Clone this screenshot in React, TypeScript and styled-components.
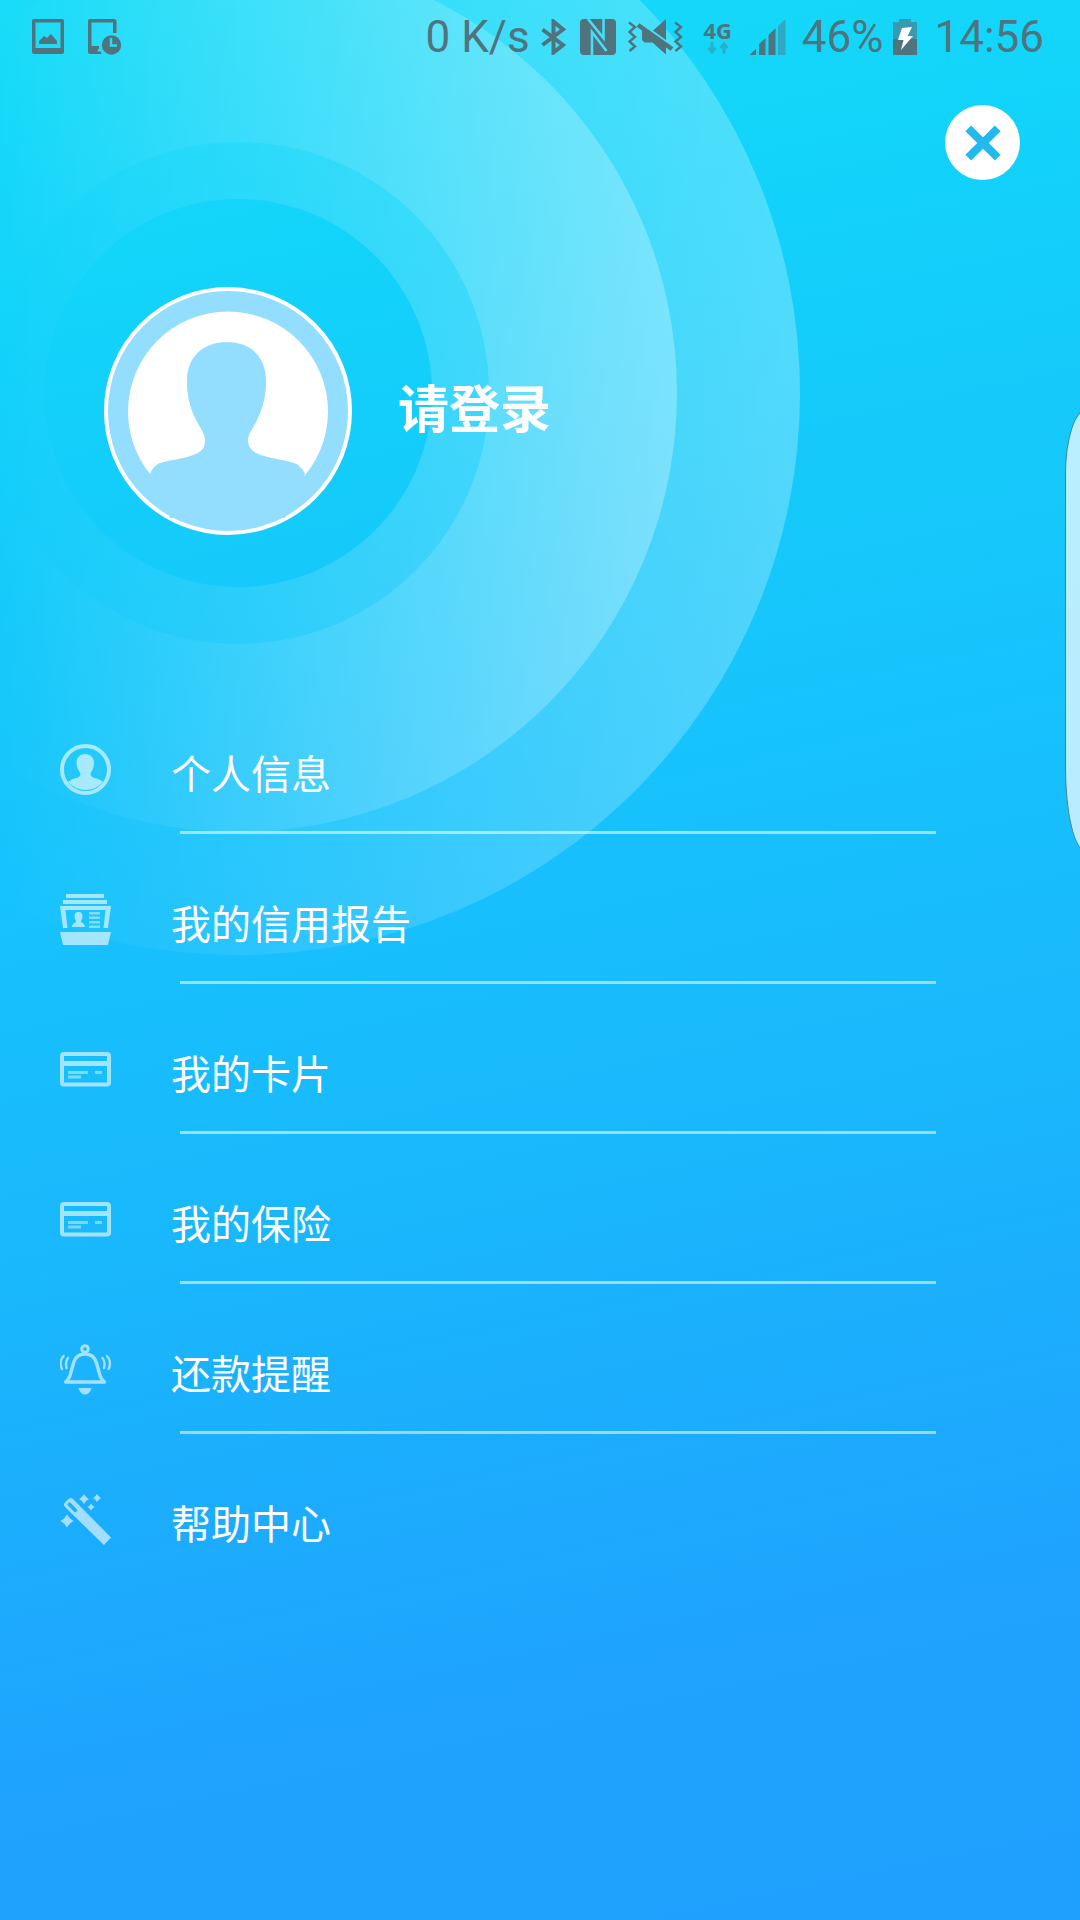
import React from "react";
import styled, { createGlobalStyle } from "styled-components";

const INK = "#4f747e";
const TINT = "#93ddfe";

const GlobalStyle = createGlobalStyle`
  *, *::before, *::after { box-sizing: border-box; }
  body {
    margin: 0;
    font-family: Roboto, "Noto Sans CJK SC", sans-serif;
    color: #fff;
  }
`;

const Screen = styled.div`
  position: relative;
  isolation: isolate;
  min-height: 100vh;
  overflow: hidden;
  background: linear-gradient(
    168deg,
    #18dcf8 0%,
    #12d3fa 15%,
    #15cafa 29%,
    #17c0fd 46%,
    #19b8fc 59%,
    #1cacfd 73%,
    #1fa3fe 84%,
    #1fa0ff 100%
  );
`;

const Ripples = styled.svg`
  position: absolute;
  top: 0;
  left: 0;
  z-index: -1;
`;

const StatusBar = styled.div`
  display: flex;
  align-items: center;
  justify-content: space-between;
  height: 74px;
  padding: 0 36px 0 32px;
  color: ${INK};
`;

const StatusGroup = styled.div<{ $gap: number }>`
  display: flex;
  align-items: center;
  gap: ${(p) => p.$gap}px;
`;

const StatusText = styled.span`
  font-size: 44px;
  line-height: 52px;
  white-space: nowrap;
`;

const Network = styled.span`
  display: flex;
  flex-direction: column;
  align-items: center;
  width: 40px;
  font: 700 22px/22px "Noto Sans", sans-serif;
`;

const Toolbar = styled.header`
  display: flex;
  justify-content: flex-end;
  padding: 31px 60px 0;
`;

const CloseButton = styled.button`
  display: grid;
  place-items: center;
  width: 75px;
  height: 75px;
  padding: 0;
  border: 0;
  border-radius: 50%;
  background: #fff;
  color: #22b9ee;
  cursor: pointer;
`;

const Profile = styled.a`
  display: flex;
  align-items: center;
  gap: 46px;
  margin: 107px 104px 0;
  color: inherit;
  text-decoration: none;
`;

const LoginText = styled.span`
  font-size: 51px;
  line-height: 64px;
  font-weight: 700;
`;

const Menu = styled.ul`
  margin: 149px 0 0;
  padding: 0;
  list-style: none;
`;

const MenuItem = styled.li`
  &:not(:last-child)::after {
    content: "";
    display: block;
    height: 3px;
    margin: 0 144px 0 180px;
    background: rgba(255, 255, 255, 0.55);
  }
`;

const MenuLink = styled.a`
  display: flex;
  align-items: flex-start;
  gap: 60px;
  height: 147px;
  padding: 60px 60px 0;
  color: inherit;
  text-decoration: none;
`;

const MenuIcon = styled.svg`
  flex: none;
  width: 51px;
  height: 51px;
  color: #fff;
  opacity: 0.6;
`;

const MenuLabel = styled.span`
  font-size: 40px;
  line-height: 64px;
`;

const EdgeHandle = styled.button`
  position: absolute;
  top: 409px;
  right: -30px;
  width: 45px;
  height: 444px;
  padding: 0;
  border: 1px solid #40809c;
  border-radius: 22px / 65px 65px 85px 85px;
  background: rgba(255, 255, 255, 0.7);
`;

const ring = (r: number, inner: number) =>
  `M${238 - r} 393a${r} ${r} 0 1 0 ${2 * r} 0a${r} ${r} 0 1 0 ${-2 * r} 0z` +
  `M${238 - inner} 393a${inner} ${inner} 0 1 0 ${2 * inner} 0a${inner} ${inner} 0 1 0 ${-2 * inner} 0z`;

const rings = [
  { id: "outer", r: 562, inner: 439, end: 801, alpha: 0.26 },
  { id: "middle", r: 439, inner: 251, end: 677, alpha: 0.44 },
  { id: "inner", r: 251, inner: 194, end: 489, alpha: 0.19 },
];

const star = (x: number, y: number, r: number) => {
  const k = r * 0.42;
  return `M${x} ${y - r}L${x + k} ${y - k}L${x + r} ${y}L${x + k} ${y + k}L${x} ${y + r}L${x - k} ${y + k}L${x - r} ${y}L${x - k} ${y - k}z`;
};

const PersonIcon = () => (
  <MenuIcon viewBox="0 0 51 51" aria-hidden="true">
    <circle cx="25.5" cy="25.5" r="23.500" fill="none" stroke="currentColor" strokeWidth="4" />
    <path
      fill="currentColor"
      d="M25 10c-5 0-8.500 3.500-8.500 8.500 0 4 1.500 7 3.500 10 1 2.500 0 4-2 5-3 1.300-7 1.500-10 4.500a23 23 0 0 0 35 0c-3-3-7-3.200-10-4.500-2-1-3-2.500-2-5 2-3 3-6 3-10C34 13.500 30 10 25 10z"
    />
  </MenuIcon>
);

const ReportIcon = () => (
  <MenuIcon viewBox="0 0 51 51" aria-hidden="true">
    <g fill="currentColor">
      <path d="M6 0h38v4H6zM3 6h44v4H3zM0 38h51l-3 13H3z" />
      <path d="M0 12h51l-3 22h-4.500l2-18H5.500l2 18H3z" />
      <path d="M18.500 18c-3 0-4 2-4 4.500s1.500 3.500 1.500 5-4 1.500-4 5.500h13c0-4-4-4-4-5.500s1.500-2.500 1.500-5-1-4.500-4-4.500z" />
      <path opacity=".75" d="M29 18h11v2.500H29zM29 22.500h11V25H29zM29 27h11v2.500H29zM29 31.500h11V34H29z" />
    </g>
  </MenuIcon>
);

const CardIcon = () => (
  <MenuIcon viewBox="0 0 51 51" aria-hidden="true">
    <rect x="2" y="10" width="47" height="30.500" rx="2" fill="none" stroke="currentColor" strokeWidth="4" />
    <path fill="currentColor" d="M4 17h43v5H4z" />
    <path stroke="currentColor" strokeWidth="2.800" opacity=".75" d="M8 28.500h20M8 33h13M35 28.500h7" />
  </MenuIcon>
);

const BellIcon = () => (
  <MenuIcon viewBox="0 0 51 51" aria-hidden="true">
    <g fill="none" stroke="currentColor" strokeLinecap="round">
      <circle cx="25" cy="5" r="3.300" strokeWidth="3" />
      <path strokeWidth="3.400" strokeLinejoin="round" d="M5.500 38h39c-4-3-4.500-6-5.500-10l-2.500-9c-1.500-5.500-5-9-11.500-9s-10 3.500-11.500 9L11 28c-1 4-1.500 7-5.500 10z" />
      <path strokeWidth="2.400" d="M3.500 12c-3.500 4-3.500 9-1.500 13M8 14c-2.500 3-2.500 6-1.500 10M47 12c3.500 4 3.500 9 1.500 13M42.500 14c2.500 3 2.500 6 1.500 10" />
    </g>
    <path fill="currentColor" d="M18.500 44h13c-1 4-3.500 6.500-6.500 6.500s-5.500-2.500-6.500-6.500z" />
  </MenuIcon>
);

const WandIcon = () => (
  <MenuIcon viewBox="0 0 51 51" aria-hidden="true">
    <g fill="currentColor">
      <path
        fillRule="evenodd"
        d="M4.500 9l4-4c1.500-1.200 3-1.200 4.500 0L51 43.500l-7 7.500L5 13c-1.200-1.200-1.200-2.800-.5-4zM8 9.500c-.5.500-.5 1.500 0 2l6.500 6.500c1 1 3.500-1.500 2.500-2.500L10.500 8.800c-.8-.6-1.800-.2-2.500.7z"
      />
      <path d={star(7, 27, 6.5) + star(24, 5, 5) + star(37, 4, 4) + star(31, 13, 3.5)} />
    </g>
  </MenuIcon>
);

const items = [
  { label: "个人信息", Icon: PersonIcon },
  { label: "我的信用报告", Icon: ReportIcon },
  { label: "我的卡片", Icon: CardIcon },
  { label: "我的保险", Icon: CardIcon },
  { label: "还款提醒", Icon: BellIcon },
  { label: "帮助中心", Icon: WandIcon },
];

const PictureGlyph = () => (
  <svg width="32" height="36" viewBox="0 0 32 36" fill={INK} aria-hidden="true">
    <path fillRule="evenodd" d="M2 0h28a2 2 0 0 1 2 2v31a2 2 0 0 1-2 2H2a2 2 0 0 1-2-2V2a2 2 0 0 1 2-2zM3.500 3.500V29h25V3.500z" />
    <path d="M7 25v-3l5-5 3 2 4-4 6 7v3z" />
  </svg>
);

const DeviceClockGlyph = () => (
  <svg width="34" height="36" viewBox="0 0 34 36" fill={INK} aria-hidden="true">
    <path d="M2 0h24a2.500 2.500 0 0 1 2.500 2.500V14H25V3.500H3.500V27H11v2.500L9 32l4 1v2H2a2 2 0 0 1-2-2V2a2 2 0 0 1 2-2z" />
    <circle cx="23.500" cy="26" r="9.700" />
    <path fill="none" stroke="#2bdaf9" strokeWidth="2.500" d="M23 19v7.500h6" />
  </svg>
);

const BluetoothGlyph = () => (
  <svg width="28" height="36" viewBox="0 0 28 36" fill="none" stroke={INK} strokeWidth="4" aria-hidden="true">
    <path d="M2.500 10.500L23 26l-9.500 7.500v-31L23 10.500 2.500 26" />
  </svg>
);

const NfcGlyph = () => (
  <svg width="40" height="36" viewBox="0 0 40 36" aria-hidden="true">
    <rect x="2" width="36" height="36" rx="4" fill={INK} />
    <path fill="none" stroke="#48dcfa" strokeWidth="2.600" d="M10 0L25.500 19V0M14 36V13l14.500 19" />
  </svg>
);

const MuteGlyph = () => (
  <svg width="60" height="36" viewBox="0 0 60 36" aria-hidden="true">
    <path fill={INK} d="M25 11.500L38 0v21zM14 10l24 16v9.500L24.500 23.500h-8L14 21z" />
    <path stroke={INK} strokeWidth="4.500" d="M10 6l34 24" />
    <path
      fill="none"
      stroke={INK}
      strokeWidth="2.400"
      d="M1 3.500L7 8l-5.500 5L7 18l-5.500 4.500L7 27.500 1.500 32M47 3.500L53 8l-5.500 5 5.500 5-5.500 4.500 5.500 5-5.500 4.500"
    />
  </svg>
);

const DataArrows = () => (
  <svg width="24" height="14" viewBox="0 0 24 14" fill="none" stroke={INK} strokeWidth="3" opacity=".4" aria-hidden="true">
    <path d="M6 1v10M2.500 7L6 11l3.500-4M18 13V3M14.500 7L18 3l3.500 4" />
  </svg>
);

const SignalGlyph = () => (
  <svg width="44" height="36" viewBox="0 0 44 36" fill={INK} aria-hidden="true">
    <path d="M1.500 36L8 30v6zM11 36V25l6.500-6v17zM20.500 36V16l7-7v27z" />
    <path opacity=".45" d="M30 36V7l7.500-7v36z" />
  </svg>
);

const BatteryGlyph = () => (
  <svg width="31" height="36" viewBox="0 0 31 36" fill={INK} aria-hidden="true">
    <path opacity=".6" d="M0 3h6V0h12v3h6v17H0z" />
    <path d="M0 20h24v16H0z" />
    <path fill="#fff" d="M9 9l10-1-4.500 9H20L8 31l2.500-10H5z" />
  </svg>
);

const Avatar = () => (
  <svg width="248" height="248" viewBox="0 0 248 248" aria-hidden="true">
    <circle cx="124" cy="124" r="122" fill={TINT} stroke="#fff" strokeWidth="4" />
    <circle cx="124" cy="124.500" r="100" fill="#fff" />
    <path
      fill={TINT}
      d="M123.500 55C99 55 83 70 83 94c0 15 3 26 8 37 5 10 10 15 10 22 0 6-2 10-7 13-12 6-25 6-38 10-5 2-8 6-10 11l20 44h115l20-44c-2-5-6-9-11-11-12-4-25-4-38-10-5-3-8-7-8-13 0-7 6-12 10-22 5-11 8-22 8-37 0-24-15-39-39.500-39z"
    />
  </svg>
);

export default function App() {
  return (
    <>
      <GlobalStyle />
      <Screen>
        <Ripples width="802" height="956" viewBox="0 0 802 956" aria-hidden="true">
          <defs>
            {rings.map((g) => (
              <linearGradient key={g.id} id={g.id} gradientUnits="userSpaceOnUse" x1="0" x2={g.end} y1="0" y2="0">
                <stop offset="0" stopColor="#fff" stopOpacity="0" />
                <stop offset="1" stopColor="#fff" stopOpacity={g.alpha} />
              </linearGradient>
            ))}
          </defs>
          {rings.map((g) => (
            <path key={g.id} fillRule="evenodd" fill={`url(#${g.id})`} d={ring(g.r, g.inner)} />
          ))}
        </Ripples>

        <StatusBar>
          <StatusGroup $gap={24}>
            <PictureGlyph />
            <DeviceClockGlyph />
          </StatusGroup>
          <StatusGroup $gap={10}>
            <StatusText>0 K/s</StatusText>
            <BluetoothGlyph />
            <NfcGlyph />
            <MuteGlyph />
            <Network>
              4G
              <DataArrows />
            </Network>
            <SignalGlyph />
            <StatusText>46%</StatusText>
            <BatteryGlyph />
            <StatusText>14:56</StatusText>
          </StatusGroup>
        </StatusBar>

        <Toolbar>
          <CloseButton type="button" aria-label="关闭">
            <svg width="38" height="38" viewBox="0 0 40 40" aria-hidden="true">
              <path stroke="currentColor" strokeWidth="8.500" d="M4.500 4.500l31 31M35.500 4.500l-31 31" />
            </svg>
          </CloseButton>
        </Toolbar>

        <Profile href="#login">
          <Avatar />
          <LoginText>请登录</LoginText>
        </Profile>

        <nav>
          <Menu>
            {items.map(({ label, Icon }) => (
              <MenuItem key={label}>
                <MenuLink href="#menu">
                  <Icon />
                  <MenuLabel>{label}</MenuLabel>
                </MenuLink>
              </MenuItem>
            ))}
          </Menu>
        </nav>

        <EdgeHandle type="button" aria-label="侧边面板" />
      </Screen>
    </>
  );
}
